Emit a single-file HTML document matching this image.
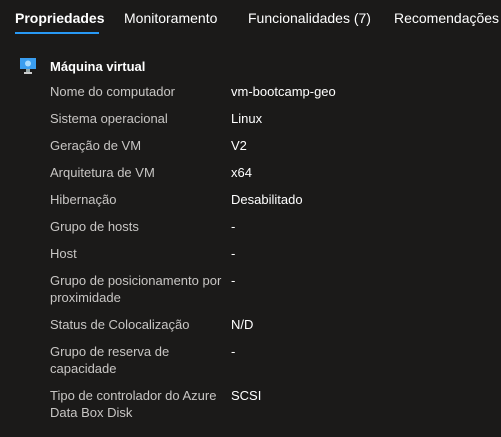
<!DOCTYPE html><html><head><style>
body{margin:0;width:501px;height:437px;background:#1b1a19;font-family:"Liberation Sans",sans-serif;color:#fff;overflow:hidden;position:relative}
.t{position:absolute;top:10px;font-size:14px;color:#fff;white-space:nowrap}
.a{position:absolute;font-size:13px;color:#c8c6c4;left:50px;line-height:17px;width:180px}
.v{position:absolute;font-size:13px;color:#fff;left:231px;line-height:17px}
</style></head><body>
<div class="t" style="left:15px;font-weight:bold">Propriedades</div>
<div style="position:absolute;left:15px;top:32px;width:84px;height:2px;background:#2899f5"></div>
<div class="t" style="left:124px">Monitoramento</div>
<div class="t" style="left:248px">Funcionalidades (7)</div>
<div class="t" style="left:394px">Recomendações</div>
<svg style="position:absolute;left:19px;top:57px" width="18" height="18" viewBox="0 0 18 18"><rect x="1" y="1" width="16" height="11" fill="#3a9ef0"/><circle cx="9" cy="6.5" r="3" fill="#a8dcff"/><rect x="7" y="12" width="4" height="3" fill="#9aa"/><rect x="5" y="15" width="8" height="2" fill="#ccc"/></svg>
<div style="position:absolute;left:50px;top:59px;font-size:13px;font-weight:bold">Máquina virtual</div>
<div class="a" style="top:83px">Nome do computador</div><div class="v" style="top:83px">vm-bootcamp-geo</div>
<div class="a" style="top:110px">Sistema operacional</div><div class="v" style="top:110px">Linux</div>
<div class="a" style="top:137px">Geração de VM</div><div class="v" style="top:137px">V2</div>
<div class="a" style="top:164px">Arquitetura de VM</div><div class="v" style="top:164px">x64</div>
<div class="a" style="top:191px">Hibernação</div><div class="v" style="top:191px">Desabilitado</div>
<div class="a" style="top:218px">Grupo de hosts</div><div class="v" style="top:218px">-</div>
<div class="a" style="top:245px">Host</div><div class="v" style="top:245px">-</div>
<div class="a" style="top:272px">Grupo de posicionamento por proximidade</div><div class="v" style="top:272px">-</div>
<div class="a" style="top:316px">Status de Colocalização</div><div class="v" style="top:316px">N/D</div>
<div class="a" style="top:343px">Grupo de reserva de capacidade</div><div class="v" style="top:343px">-</div>
<div class="a" style="top:387px">Tipo de controlador do Azure Data Box Disk</div><div class="v" style="top:387px">SCSI</div>
</body></html>
